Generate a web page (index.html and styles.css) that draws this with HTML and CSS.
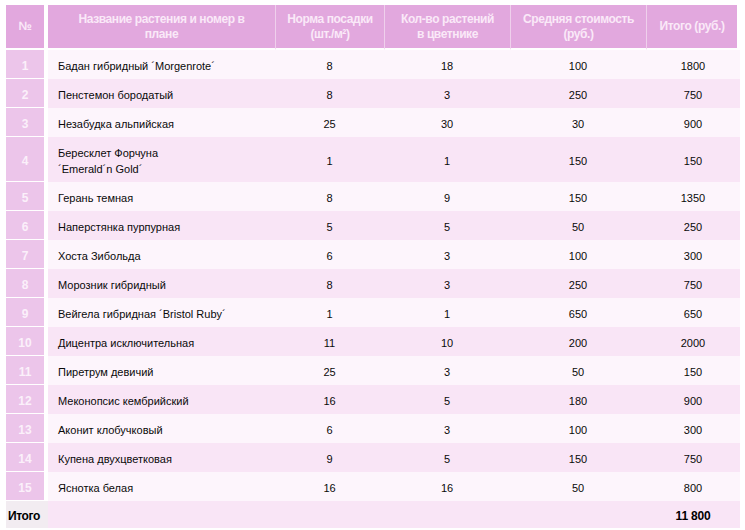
FILE: index.html
```html
<!DOCTYPE html>
<html lang="ru">
<head>
<meta charset="utf-8">
<link rel="stylesheet" href="styles.css">
</head>
<body>
<table class="plants">
  <colgroup>
    <col class="c-num"><col class="c-name"><col class="c-norm"><col class="c-qty"><col class="c-price"><col class="c-total">
  </colgroup>
  <thead>
    <tr>
      <th class="num">№</th>
      <th>Название растения и номер в<br>плане</th>
      <th>Норма посадки<br>(шт./м²)</th>
      <th>Кол-во растений<br>в цветнике</th>
      <th>Средняя стоимость<br>(руб.)</th>
      <th>Итого (руб.)</th>
    </tr>
  </thead>
  <tbody>
    <tr class="odd"><td class="num">1</td><td class="name">Бадан гибридный ´Morgenrote´</td><td>8</td><td>18</td><td>100</td><td>1800</td></tr>
    <tr class="even"><td class="num">2</td><td class="name">Пенстемон бородатый</td><td>8</td><td>3</td><td>250</td><td>750</td></tr>
    <tr class="odd"><td class="num">3</td><td class="name">Незабудка альпийская</td><td>25</td><td>30</td><td>30</td><td>900</td></tr>
    <tr class="even tall"><td class="num">4</td><td class="name">Бересклет Форчуна<br>´Emerald´n Gold´</td><td>1</td><td>1</td><td>150</td><td>150</td></tr>
    <tr class="odd"><td class="num">5</td><td class="name">Герань темная</td><td>8</td><td>9</td><td>150</td><td>1350</td></tr>
    <tr class="even"><td class="num">6</td><td class="name">Наперстянка пурпурная</td><td>5</td><td>5</td><td>50</td><td>250</td></tr>
    <tr class="odd"><td class="num">7</td><td class="name">Хоста Зибольда</td><td>6</td><td>3</td><td>100</td><td>300</td></tr>
    <tr class="even"><td class="num">8</td><td class="name">Морозник гибридный</td><td>8</td><td>3</td><td>250</td><td>750</td></tr>
    <tr class="odd"><td class="num">9</td><td class="name">Вейгела гибридная ´Bristol Ruby´</td><td>1</td><td>1</td><td>650</td><td>650</td></tr>
    <tr class="even"><td class="num">10</td><td class="name">Дицентра исключительная</td><td>11</td><td>10</td><td>200</td><td>2000</td></tr>
    <tr class="odd"><td class="num">11</td><td class="name">Пиретрум девичий</td><td>25</td><td>3</td><td>50</td><td>150</td></tr>
    <tr class="even"><td class="num">12</td><td class="name">Меконопсис кембрийский</td><td>16</td><td>5</td><td>180</td><td>900</td></tr>
    <tr class="odd"><td class="num">13</td><td class="name">Аконит клобучковый</td><td>6</td><td>3</td><td>100</td><td>300</td></tr>
    <tr class="even"><td class="num">14</td><td class="name">Купена двухцветковая</td><td>9</td><td>5</td><td>150</td><td>750</td></tr>
    <tr class="odd"><td class="num">15</td><td class="name">Яснотка белая</td><td>16</td><td>16</td><td>50</td><td>800</td></tr>
  </tbody>
  <tfoot>
    <tr class="sum">
      <td class="sum-label">Итого</td><td></td><td></td><td></td><td></td><td class="sum-value">11 800</td>
    </tr>
  </tfoot>
</table>
</body>
</html>
```
FILE: styles.css
```css
html, body {
  background: #ffffff;
}
body {
  margin: 5px 0 0 6px;
  font-family: "Liberation Sans", Arial, sans-serif;
}
.plants {
  border-collapse: separate;
  border-spacing: 0;
  table-layout: fixed;
  width: 734px;
}
.c-num { width: 42px; }
.c-name { width: 227px; }
.c-norm { width: 109px; }
.c-qty { width: 126px; }
.c-price { width: 136px; }
.c-total { width: 94px; }

.plants th {
  height: 43px;
  padding: 0 4px;
  background: #e2a8de;
  color: #fae9f8;
  font-size: 12px;
  font-weight: bold;
  line-height: 15px;
  letter-spacing: -0.4px;
  text-align: center;
  vertical-align: middle;
  border-bottom: 2px solid #ffffff;
  border-left: 1px solid #efd0ec;
}
.plants th.num {
  border-left: none;
  border-right: 4px solid #ffffff;
}
.plants th:nth-child(2) { border-left: none; }
.plants th:last-child { border-right: 3px solid #ffffff; }

.plants td {
  height: 25px;
  padding: 3px 0 0;
  font-size: 11px;
  color: #0a0a0a;
  text-align: center;
  vertical-align: middle;
  border-bottom: 1px solid transparent;
}
.plants tr.odd td { background: #fdf5fc; }
.plants tr.even td { background: #f9e5f6; }
.plants tr.tall td { height: 41px; }

.plants td.num {
  background: #ecc5ea !important;
  color: #fbf0fa;
  font-weight: bold;
  font-size: 12px;
  border-right: 4px solid #ffffff;
  border-bottom: 1px solid #ffffff;
}
.plants td.name {
  text-align: left;
  padding-left: 10px;
  line-height: 16px;
}

.plants tr.sum td {
  height: 23px;
  background: #f9e5f6;
  font-weight: bold;
  font-size: 12px;
  color: #000000;
}
.plants td.sum-label {
  background: #f2ecf1 !important;
  text-align: left;
  padding-left: 2px;
  letter-spacing: -0.4px;
}
.plants td.sum-value {
  letter-spacing: -0.2px;
}
```
